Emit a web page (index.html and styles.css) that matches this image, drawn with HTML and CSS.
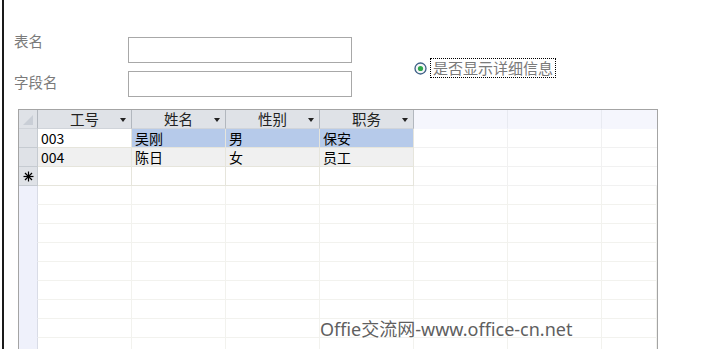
FILE: index.html
```html
<!DOCTYPE html>
<html>
<head>
<meta charset="utf-8">
<link rel="stylesheet" href="styles.css">
</head>
<body>
<div class="frame">
  <div class="form">
    <div class="fields">
      <div class="field">
        <span class="label l1">表名</span>
        <div class="input"></div>
      </div>
      <div class="field">
        <span class="label l2">字段名</span>
        <div class="input"></div>
      </div>
    </div>
    <div class="option">
      <svg class="radio" width="13" height="13" viewBox="0 0 13 13">
        <circle cx="6.5" cy="6.5" r="5.5" fill="#f4f6f8" stroke="#3d5f86" stroke-width="1.3"/>
        <circle cx="6.5" cy="6.5" r="2.6" fill="#2fa84a"/>
      </svg>
      <span class="opt-text">是否显示详细信息</span>
    </div>
  </div>

  <div class="sheet">
    <div class="row head">
      <div class="sel corner">
        <svg width="18" height="18" viewBox="0 0 18 18"><polygon points="4,15 14,15 14,5" fill="#c9ced6"/></svg>
      </div>
      <div class="hc">工号<span class="arr"></span></div>
      <div class="hc">姓名<span class="arr"></span></div>
      <div class="hc">性别<span class="arr"></span></div>
      <div class="hc">职务<span class="arr"></span></div>
      <div class="hb"></div>
      <div class="hb"></div>
      <div class="hb last"></div>
    </div>
    <div class="row sel-row">
      <div class="sel"></div>
      <div class="c cur">003</div>
      <div class="c hl">吴刚</div>
      <div class="c hl">男</div>
      <div class="c hl">保安</div>
      <div class="e"></div><div class="e"></div><div class="e last"></div>
    </div>
    <div class="row alt">
      <div class="sel"></div>
      <div class="c">004</div>
      <div class="c">陈日</div>
      <div class="c">女</div>
      <div class="c">员工</div>
      <div class="e"></div><div class="e"></div><div class="e last"></div>
    </div>
    <div class="row">
      <div class="sel star">
        <svg width="11" height="11" viewBox="0 0 11 11"><g stroke="#000" stroke-width="1.2"><line x1="5.5" y1="0.5" x2="5.5" y2="10.5"/><line x1="0.5" y1="5.5" x2="10.5" y2="5.5"/><line x1="2" y1="2" x2="9" y2="9"/><line x1="9" y1="2" x2="2" y2="9"/></g></svg>
      </div>
      <div class="c"></div><div class="c"></div><div class="c"></div><div class="c"></div>
      <div class="e"></div><div class="e"></div><div class="e last"></div>
    </div>
    <div class="row blank"><div class="sel"></div><div class="e"></div><div class="e"></div><div class="e"></div><div class="e"></div><div class="e"></div><div class="e"></div><div class="e last"></div></div>
    <div class="row blank"><div class="sel"></div><div class="e"></div><div class="e"></div><div class="e"></div><div class="e"></div><div class="e"></div><div class="e"></div><div class="e last"></div></div>
    <div class="row blank"><div class="sel"></div><div class="e"></div><div class="e"></div><div class="e"></div><div class="e"></div><div class="e"></div><div class="e"></div><div class="e last"></div></div>
    <div class="row blank"><div class="sel"></div><div class="e"></div><div class="e"></div><div class="e"></div><div class="e"></div><div class="e"></div><div class="e"></div><div class="e last"></div></div>
    <div class="row blank"><div class="sel"></div><div class="e"></div><div class="e"></div><div class="e"></div><div class="e"></div><div class="e"></div><div class="e"></div><div class="e last"></div></div>
    <div class="row blank"><div class="sel"></div><div class="e"></div><div class="e"></div><div class="e"></div><div class="e"></div><div class="e"></div><div class="e"></div><div class="e last"></div></div>
    <div class="row blank"><div class="sel"></div><div class="e"></div><div class="e"></div><div class="e"></div><div class="e"></div><div class="e"></div><div class="e"></div><div class="e last"></div></div>
    <div class="row blank"><div class="sel"></div><div class="e"></div><div class="e"></div><div class="e"></div><div class="e"></div><div class="e"></div><div class="e"></div><div class="e last"></div></div>
    <div class="row blank"><div class="sel"></div><div class="e"></div><div class="e"></div><div class="e"></div><div class="e"></div><div class="e"></div><div class="e"></div><div class="e last"></div></div>
    <div class="watermark">Offie交流网-www.office-cn.net</div>
  </div>
</div>
</body>
</html>
```

FILE: styles.css
```css
html, body {
  margin: 0;
  padding: 0;
  background: #ffffff;
}
body {
  width: 704px;
  height: 349px;
  overflow: hidden;
  font-family: "Noto Sans CJK SC", "Liberation Sans", sans-serif;
  font-size: 14px;
}
.frame {
  margin-left: 2px;
  border-left: 2px solid #1a1a1a;
  height: 349px;
  box-sizing: border-box;
  padding-top: 37px;
}
.form {
  display: flex;
  align-items: flex-start;
}
.fields {
  display: flex;
  flex-direction: column;
  gap: 8px;
  padding-left: 10px;
}
.field {
  display: flex;
  align-items: flex-start;
}
.label {
  width: 114px;
  color: #7a7a7a;
  font-size: 14.5px;
  line-height: 15px;
}
.l1 { margin-top: -4px; }
.l2 { margin-top: 3px; }
.input {
  width: 224px;
  height: 26px;
  box-sizing: border-box;
  border: 1px solid #a8a8a8;
  background: #fff;
}
.option {
  display: flex;
  align-items: center;
  margin-left: 62px;
  margin-top: 21px;
}
.radio {
  display: block;
}
.opt-text {
  margin-left: 3px;
  height: 20px;
  box-sizing: border-box;
  border: 1px dotted #000;
  padding: 0 2px;
  color: #7a7a7a;
  font-size: 15px;
  line-height: 18px;
}
.sheet {
  position: relative;
  margin-top: 12px;
  margin-left: 14px;
  width: 640px;
  border: 1px solid #a4a4a4;
  border-bottom: none;
  box-sizing: border-box;
}
.row {
  display: grid;
  grid-template-columns: 19px 94px 94px 94px 94px 94px 94px 1fr;
  height: 19px;
}
.row > div {
  box-sizing: border-box;
  height: 19px;
}
.head .sel, .head .hc {
  background: #dfe2e7;
  border-right: 1px solid #b2b7be;
  border-bottom: 1px solid #d0d4da;
}
.corner {
  display: flex;
  align-items: flex-end;
  justify-content: flex-start;
}
.corner svg { display: block; }
.hc {
  position: relative;
  text-align: center;
  color: #222;
  line-height: 18px;
  font-size: 14.5px;
}
.arr {
  position: absolute;
  right: 5px;
  top: 8px;
  width: 0;
  height: 0;
  border-left: 3px solid transparent;
  border-right: 3px solid transparent;
  border-top: 4px solid #222;
}
.hb {
  background: #f5f6fd;
  border-right: 1px solid #e8eaf1;
  border-bottom: 1px solid #f5f6fd;
}
.hb.last, .e.last { border-right: none; }
.sel {
  background: #dfe2e7;
  border-right: 1px solid #c6cbd1;
  border-bottom: 1px solid #c6cbd1;
}
.star {
  display: flex;
  align-items: center;
  justify-content: center;
}
.star svg { display: block; }
.blank .sel {
  background: #eff1fb;
  border-right: 1px solid #d9dce6;
  border-bottom: 1px solid #eff1fb;
}
.c {
  padding-left: 3px;
  color: #000;
  line-height: 18px;
  font-size: 14px;
  border-right: 1px solid #e6e5dc;
  border-bottom: 1px solid #e6e5dc;
  white-space: nowrap;
}
.cur { background: #ffffff; }
.hl { background: #b6caea; }
.alt .c { background: #f0f0f0; }
.e {
  border-right: 1px solid #f1f1f1;
  border-bottom: 1px solid #f1f1f1;
}
.blank .e {
  border-right: 1px solid #f2f2ee;
  border-bottom: 1px solid #f2f2ee;
}
.watermark {
  position: absolute;
  left: 301px;
  top: 205px;
  font-family: "Noto Sans", "Noto Sans CJK SC", sans-serif;
  font-size: 18px;
  color: #5f5f5f;
  white-space: nowrap;
}
```
